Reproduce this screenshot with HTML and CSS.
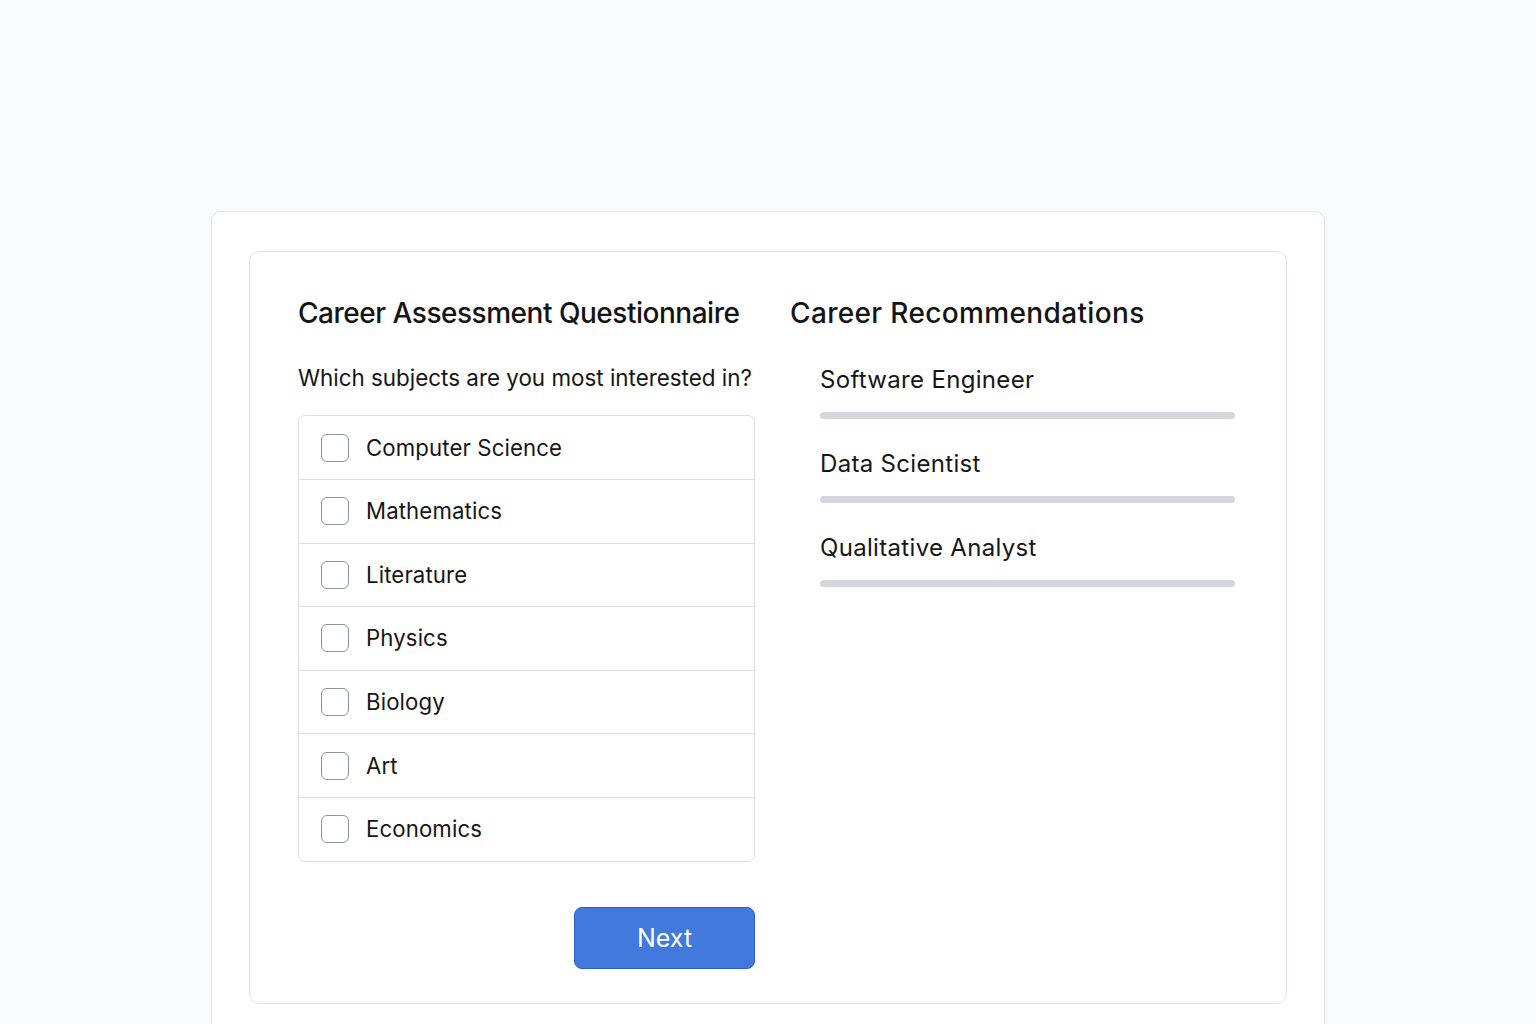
FILE: index.html
```html
<!DOCTYPE html>
<html lang="en">
<head>
<meta charset="utf-8">
<title>Career Assessment</title>
<link rel="stylesheet" href="styles.css">
</head>
<body>
<div class="outer">
  <div class="inner">
    <section class="left">
      <h1 class="title title-left">Career Assessment Questionnaire</h1>
      <p class="question">Which subjects are you most interested in?</p>
      <ul class="options">
        <li class="option"><span class="box"></span><span class="label">Computer Science</span></li>
        <li class="option"><span class="box"></span><span class="label">Mathematics</span></li>
        <li class="option"><span class="box"></span><span class="label">Literature</span></li>
        <li class="option"><span class="box"></span><span class="label">Physics</span></li>
        <li class="option"><span class="box"></span><span class="label">Biology</span></li>
        <li class="option"><span class="box"></span><span class="label">Art</span></li>
        <li class="option"><span class="box"></span><span class="label">Economics</span></li>
      </ul>
      <div class="actions"><button class="next">Next</button></div>
    </section>
    <section class="right">
      <h1 class="title title-right">Career Recommendations</h1>
      <div class="recs">
        <div class="rec"><div class="rec-name">Software Engineer</div><div class="bar"></div></div>
        <div class="rec"><div class="rec-name">Data Scientist</div><div class="bar"></div></div>
        <div class="rec"><div class="rec-name">Qualitative Analyst</div><div class="bar"></div></div>
      </div>
    </section>
  </div>
</div>
</body>
</html>
```
FILE: styles.css
```css
* { box-sizing: border-box; }
html, body { margin: 0; padding: 0; }
body {
  background: #f9fafb;
  font-family: Inter, "Noto Sans", "Liberation Sans", sans-serif;
  color: #161616;
  height: 1024px;
  overflow: hidden;
}
.outer {
  width: 1114px;
  margin: 211px auto 0;
  background: #ffffff;
  border: 1px solid #e3e5e8;
  border-radius: 10px;
  padding: 39px 37px 60px;
}
.inner {
  border: 1px solid #dfe2e6;
  border-radius: 10px;
  height: 753px;
  padding: 43px 48px 0;
  display: grid;
  grid-template-columns: 457px 1fr;
  column-gap: 35px;
}
.title {
  margin: 0;
  font-size: 28px;
  font-weight: 500;
  line-height: 36px;
  color: #141414;
}
.title-left { letter-spacing: -0.48px; }
.title-right { letter-spacing: 0.35px; }
.question {
  margin: 32px 0 0;
  font-size: 22.4px;
  line-height: 30px;
  font-weight: 400;
}
.options {
  list-style: none;
  margin: 22px 0 0;
  padding: 0;
  border: 1px solid #dcdfe3;
  border-radius: 7px;
}
.option {
  height: 63.6px;
  display: flex;
  align-items: center;
  padding-left: 22px;
  gap: 17px;
}
.option:first-child { height: 63px; }
.option + .option { border-top: 1px solid #dcdfe3; }
.box {
  width: 28px;
  height: 28px;
  border: 1.5px solid #8e9299;
  border-radius: 6px;
  flex: none;
  background: #fff;
}
.label {
  font-size: 22.2px;
  line-height: 30px;
  letter-spacing: 0.12px;
}
.actions {
  display: flex;
  justify-content: flex-end;
  margin-top: 45px;
}
.next {
  width: 181px;
  height: 62px;
  background: #4279dc;
  border: 1.5px solid #2a5fd2;
  border-radius: 8px;
  color: #fff;
  font-family: inherit;
  font-size: 25px;
  font-weight: 400;
}
.recs {
  margin-top: 34px;
  padding-left: 30px;
  padding-right: 3px;
}
.rec + .rec { margin-top: 30px; }
.rec-name {
  font-size: 24px;
  line-height: 30px;
  letter-spacing: 0.32px;
}
.bar {
  margin-top: 17px;
  height: 7px;
  border-radius: 4px;
  background: #d3d7dd;
}
```
